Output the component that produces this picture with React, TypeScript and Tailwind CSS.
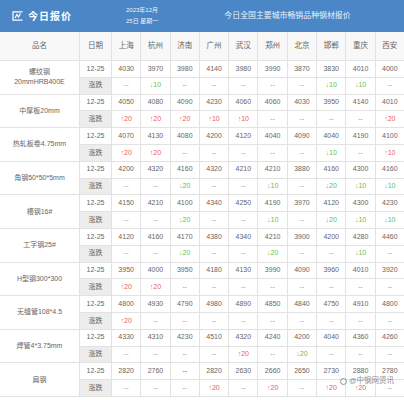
import React from "react";

const cities = ["上海", "杭州", "济南", "广州", "武汉", "郑州", "北京", "邯郸", "重庆", "西安"];

type Row = { name: string[]; price: string[]; change: string[] };

const rows: Row[] = [
  {
    name: ["螺纹钢", "20mmHRB400E"],
    price: ["4030", "3970", "3980", "4140", "3980", "3990", "3870", "3830", "4010", "4000"],
    change: ["--", "d10", "--", "--", "--", "--", "--", "d10", "d10", "--"],
  },
  {
    name: ["中厚板20mm"],
    price: ["4050", "4080", "4090", "4230", "4060", "4060", "4030", "3950", "4140", "4010"],
    change: ["u20", "u20", "u20", "u10", "u10", "--", "--", "--", "--", "u20"],
  },
  {
    name: ["热轧板卷4.75mm"],
    price: ["4070", "4130", "4080", "4200", "4120", "4040", "4090", "4040", "4190", "4100"],
    change: ["u20", "u20", "--", "--", "--", "--", "--", "d10", "--", "u10"],
  },
  {
    name: ["角钢50*50*5mm"],
    price: ["4200", "4320", "4160", "4320", "4210", "4210", "3880", "4160", "4300", "4160"],
    change: ["--", "--", "d20", "--", "--", "d10", "--", "d20", "d10", "d10"],
  },
  {
    name: ["槽钢16#"],
    price: ["4150", "4210", "4100", "4340", "4250", "4190", "3970", "4120", "4300", "4230"],
    change: ["--", "--", "d20", "--", "--", "d10", "--", "d20", "d10", "d10"],
  },
  {
    name: ["工字钢25#"],
    price: ["4120", "4160", "4170", "4380", "4340", "4210", "3900", "4200", "4280", "4460"],
    change: ["--", "--", "d20", "--", "--", "d20", "--", "--", "d10", "--"],
  },
  {
    name: ["H型钢300*300"],
    price: ["3950", "4000", "3950", "4180", "4130", "3990", "4090", "3960", "4010", "3920"],
    change: ["u20", "u20", "--", "--", "--", "--", "--", "--", "--", "--"],
  },
  {
    name: ["无缝管108*4.5"],
    price: ["4800", "4930", "4790", "4980", "4890", "4850", "4840", "4750", "4910", "4800"],
    change: ["u20", "--", "--", "--", "--", "--", "--", "--", "--", "--"],
  },
  {
    name: ["焊管4*3.75mm"],
    price: ["4330", "4310", "4230", "4510", "4320", "4240", "4200", "4040", "4360", "4260"],
    change: ["--", "--", "--", "--", "u20", "--", "d20", "--", "--", "--"],
  },
  {
    name: ["扁钢"],
    price: ["2820", "2760", "--", "2820", "2630", "2660", "2650", "2730", "2880", "2780"],
    change: ["--", "--", "--", "u20", "--", "u20", "--", "u20", "u20", "--"],
  },
];

function Change({ v }: { v: string }) {
  if (v.startsWith("u")) return <span className="text-[#e4605f]">↑{v.slice(1)}</span>;
  if (v.startsWith("d")) return <span className="text-[#5cbf5c]">↓{v.slice(1)}</span>;
  return <span className="text-[#999]">{v}</span>;
}

export default function App() {
  return (
    <div className="relative w-[404px] h-[400px] overflow-hidden bg-white text-[#666] font-['Liberation_Sans','Noto_Sans_CJK_SC',sans-serif]">
      {/* title bar */}
      <div className="flex items-center h-[32px] bg-[#4b87c6] text-white">
        <svg className="ml-[12px] w-[11px] h-[10px]" viewBox="0 0 11 10" fill="none" stroke="white" strokeWidth="1.2">
          <path d="M10.5 0.8H1V9.2H10.5" />
          <path d="M3 7L5 3.5L6.5 6L8.5 2.5" />
        </svg>
        <span className="ml-[5px] text-[10px] font-bold tracking-[1px]">今日报价</span>
        <div className="ml-[54px] flex flex-col gap-[4px] text-[6px] leading-[7px] opacity-90">
          <span>2023年12月</span>
          <span>25日 星期一</span>
        </div>
        <span className="ml-[66px] text-[7.9px] opacity-90">今日全国主要城市畅销品种钢材报价</span>
      </div>

      {/* column header */}
      <div className="flex h-[29px] bg-[#f8f8f8] border-b border-[#e2e2e2] text-[7.5px]">
        <div className="w-[80px] flex items-center justify-center border-r border-[#e2e2e2]">品名</div>
        <div className="w-[32px] flex items-center justify-center border-r border-[#e2e2e2]">日期</div>
        {cities.map((c, i) => (
          <div
            key={c}
            className={`flex-1 flex items-center justify-center ${i < cities.length - 1 ? "border-r border-[#e2e2e2]" : ""}`}
          >
            {c}
          </div>
        ))}
      </div>

      {rows.map((r) => (
        <div key={r.name.join("")} className="flex h-[33.6px] border-b border-[#e2e2e2]">
          <div className="w-[80px] flex flex-col items-center justify-center border-r border-[#e2e2e2] text-[7px] leading-[10px]">
            {r.name.map((n) => (
              <span key={n}>{n}</span>
            ))}
          </div>
          <div className="flex-1 flex flex-col text-[7px]">
            <div className="flex flex-1 border-b border-[#e2e2e2]">
              <div className="w-[32px] flex items-center justify-center border-r border-[#e2e2e2]">12-25</div>
              {r.price.map((p, i) => (
                <div
                  key={i}
                  className={`flex-1 flex items-center justify-center ${i < 9 ? "border-r border-[#e2e2e2]" : ""}`}
                >
                  {p}
                </div>
              ))}
            </div>
            <div className="flex flex-1">
              <div className="w-[32px] flex items-center justify-center border-r border-[#e2e2e2] bg-[#ededed]">涨跌</div>
              {r.change.map((c, i) => (
                <div
                  key={i}
                  className={`flex-1 flex items-center justify-center ${i < 9 ? "border-r border-[#e2e2e2]" : ""}`}
                >
                  <Change v={c} />
                </div>
              ))}
            </div>
          </div>
        </div>
      ))}

      {/* source watermark, kept in the gap between the last two text lines */}
      <div className="absolute right-[10px] top-[377px] flex items-center gap-[2px] text-[7.5px] leading-[8px] text-[#555]/70">
        <span className="w-[7px] h-[7px] rounded-full border border-[#555]/60" />
        <span>@中钢网资讯</span>
      </div>
    </div>
  );
}
